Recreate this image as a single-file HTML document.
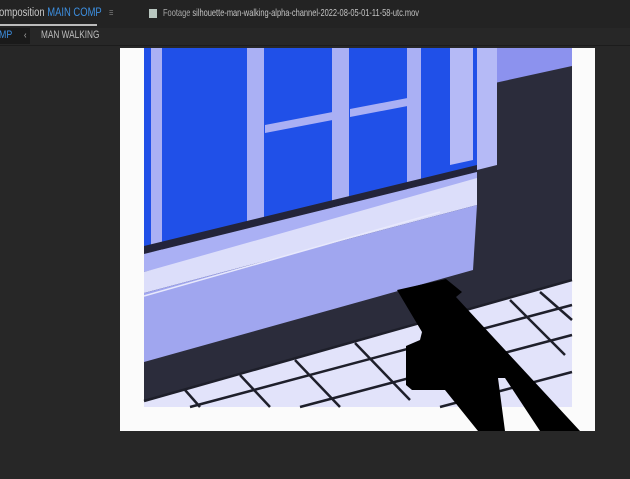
<!DOCTYPE html>
<html><head><meta charset="utf-8"><style>
html,body{margin:0;padding:0;width:630px;height:479px;overflow:hidden;background:#272727;font-family:"Liberation Sans",sans-serif;}
.t{position:absolute;white-space:nowrap;font-size:10.5px;color:#a8a8a8;transform:scaleX(0.72);transform-origin:0 0;}
</style></head><body>
<div style="position:absolute;left:0;top:0;width:630px;height:28px;background:#232323"></div>
<div class="t" style="left:-1px;top:7px;color:#c8c8c8;font-size:11.5px;transform:scaleX(0.82)">omposition <span style="color:#3d8fe0">MAIN COMP</span></div>
<div class="t" style="left:109px;top:7px;color:#777">≡</div>
<div style="position:absolute;left:0;top:24px;width:97px;height:2px;background:#bbb"></div>
<div style="position:absolute;left:149px;top:9px;width:8px;height:9px;background:#b9c7c0"></div>
<div class="t" style="left:163px;top:7px;color:#a9a9a9;font-size:10.5px;transform:scaleX(0.71)">Footage <span style="color:#c4c4c4">silhouette-man-walking-alpha-channel-2022-08-05-01-11-58-utc.mov</span></div>
<div style="position:absolute;left:0;top:28px;width:30px;height:16px;background:#1a1a1a"></div>
<div class="t" style="left:-1px;top:29px;color:#3d8fe0;font-size:11px;transform:scaleX(0.8)">MP</div>
<div class="t" style="left:24px;top:29px;color:#bbb">‹</div>
<div class="t" style="left:41px;top:29px;color:#bcbcbc;font-size:11px;transform:scaleX(0.75)">MAN WALKING</div>
<div style="position:absolute;left:0;top:45px;width:630px;height:1px;background:#1c1c1c"></div>
<svg style="position:absolute;left:0;top:0" width="630" height="479">
<rect x="120" y="48" width="475" height="383" fill="#fbfbfb"/>
<rect x="144" y="48" width="428" height="359" fill="#2b2c3b"/>
<polygon points="477,48 572,48 572,66 490,84 477,84" fill="#8c92ee"/>
<polygon points="144,48 477,48 477,172 144,248" fill="#2050e8"/>
<polygon points="151,48 162,48 162,250 151,252" fill="#aab0f4"/>
<polygon points="247,48 264,48 264,224 247,228" fill="#aab0f4"/>
<polygon points="332,48 349,48 349,205 332,209" fill="#aab0f4"/>
<polygon points="407,48 421,48 421,190 407,193" fill="#aab0f4"/>
<polygon points="450,48 473,48 473,160 450,165" fill="#b5baf6"/>
<polygon points="477,48 497,48 497,165 477,170" fill="#b5baf6"/>
<polygon points="265,125 343,110 343,118 265,133" fill="#aab0f4"/>
<polygon points="350,109 418,96 418,104 350,117" fill="#aab0f4"/>
<polygon points="144,246 477,165 477,172 144,254" fill="#23243a"/>
<polygon points="144,254 477,172 477,190 144,272" fill="#aab0f4"/>
<polygon points="144,272 477,178 477,205 144,293" fill="#dcdefa"/>
<polygon points="144,293 477,205 473,270 144,362" fill="#a0a6ef"/>
<line x1="144" y1="296" x2="440" y2="212" stroke="#e8e9fc" stroke-width="1.5"/>
<polygon points="144,401 572,280 572,407 144,407" fill="#e2e3fa"/>
<g stroke="#1e1f2a" stroke-width="2.5">
<line x1="144" y1="401" x2="572" y2="280"/>
<line x1="190" y1="407" x2="572" y2="305"/>
<line x1="300" y1="407" x2="572" y2="335"/>
<line x1="440" y1="407" x2="572" y2="372"/>
<line x1="185" y1="390" x2="200" y2="407"/>
<line x1="240" y1="375" x2="270" y2="407"/>
<line x1="295" y1="360" x2="340" y2="407"/>
<line x1="355" y1="343" x2="410" y2="400"/>
<line x1="510" y1="300" x2="565" y2="355"/>
<line x1="540" y1="292" x2="572" y2="320"/>
</g>
<polygon points="397,290 446,279 462,292 456,297 580,431 540,431 505,378 498,378 505,431 478,431 445,390 412,390 406,385 406,346 420,340 422,332" fill="#000"/>
</svg>
</body></html>
